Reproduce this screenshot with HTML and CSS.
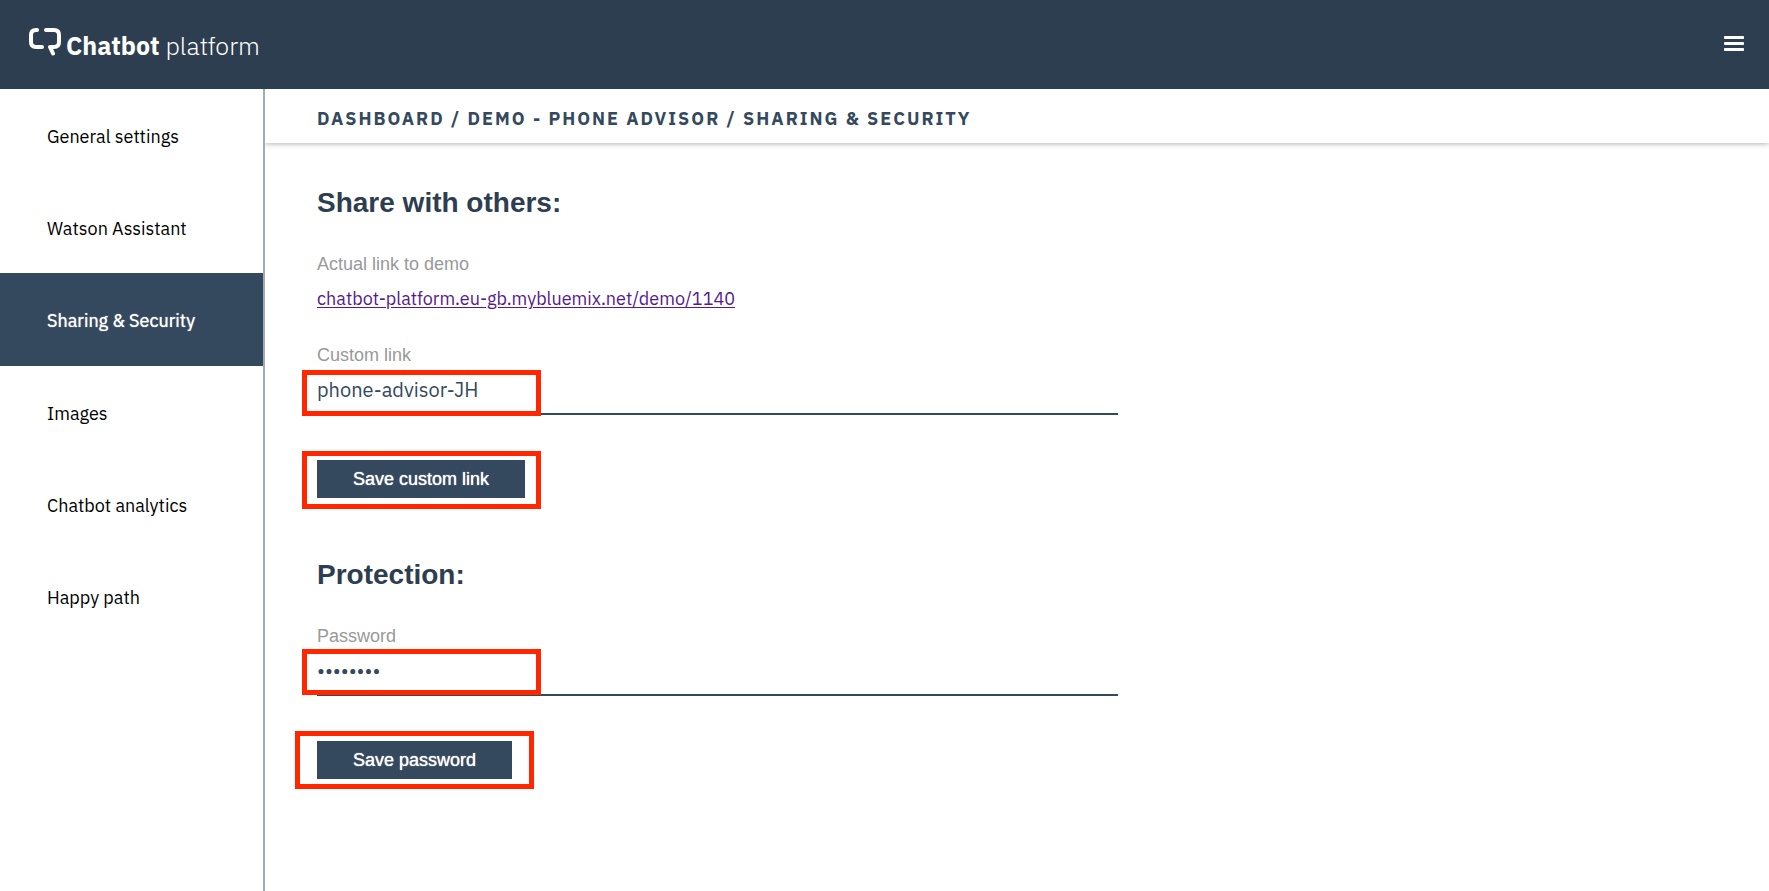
FILE: index.html
```html
<!DOCTYPE html>
<html lang="en">
<head>
<meta charset="utf-8">
<title>Chatbot platform</title>
<link rel="stylesheet" href="styles.css">
</head>
<body>
<header class="topbar">
  <a class="brand" href="#">
    <svg class="brand-mark" viewBox="0 0 34 30" fill="none" stroke="currentColor" stroke-width="4" stroke-linecap="round" stroke-linejoin="round" aria-hidden="true">
      <path d="M9 4H8Q3 4 3 9V16Q3 21 8 21H14"/>
      <path d="M18 4H26Q31 4 31 9V16Q31 21 26 21H22L25 27.500"/>
    </svg>
    <span class="brand-name"><strong>Chatbot</strong> platform</span>
  </a>
  <button class="menu-button" type="button" aria-label="Menu">
    <svg class="menu-icon" viewBox="0 0 20 18" fill="currentColor" aria-hidden="true">
      <rect x="0" y="1" width="20" height="3" rx="0.800"/>
      <rect x="0" y="7" width="20" height="3" rx="0.800"/>
      <rect x="0" y="13" width="20" height="3" rx="0.800"/>
    </svg>
  </button>
</header>
<div class="layout">
  <nav class="sidebar">
    <a class="nav-item" href="#">General settings</a>
    <a class="nav-item" href="#">Watson Assistant</a>
    <a class="nav-item active" href="#" aria-current="page">Sharing &amp; Security</a>
    <a class="nav-item" href="#">Images</a>
    <a class="nav-item" href="#">Chatbot analytics</a>
    <a class="nav-item" href="#">Happy path</a>
  </nav>
  <main class="main">
    <div class="crumbs">Dashboard / Demo - Phone Advisor / Sharing &amp; Security</div>
    <div class="content">
      <section class="section">
        <h2 class="title">Share with others:</h2>
        <p class="label">Actual link to demo</p>
        <a class="demo-link" href="#">chatbot-platform.eu-gb.mybluemix.net/demo/1140</a>
        <form class="form">
          <label class="label" for="custom-link">Custom link</label>
          <div class="field">
            <input class="input" id="custom-link" type="text" value="phone-advisor-JH">
            <span class="marker marker-field"></span>
          </div>
          <div class="action">
            <button class="button" type="button">Save custom link</button>
            <span class="marker marker-link"></span>
          </div>
        </form>
      </section>
      <section class="section">
        <h2 class="title">Protection:</h2>
        <form>
          <label class="label" for="password">Password</label>
          <div class="field">
            <input class="input" id="password" type="password" value="password">
            <span class="marker marker-password"></span>
          </div>
          <div class="action">
            <button class="button" type="button">Save password</button>
            <span class="marker marker-save"></span>
          </div>
        </form>
      </section>
    </div>
  </main>
</div>
</body>
</html>
```
FILE: styles.css
```css
* {
  box-sizing: border-box;
}

body {
  margin: 0;
  min-height: 100vh;
  display: flex;
  flex-direction: column;
  background: #fff;
  color: #34495e;
  font: 18px/24px "IBM Plex Sans", Roboto, sans-serif;
}

.topbar {
  display: flex;
  align-items: center;
  justify-content: space-between;
  height: 89px;
  padding: 0 25px 1px 28px;
  background: #2d3e50;
  color: #fff;
}

.brand {
  display: flex;
  align-items: flex-start;
  gap: 4px;
  color: #fff;
  text-decoration: none;
}

.brand-mark {
  width: 34px;
  height: 30px;
}

.brand-name {
  padding-top: 4px;
  font-size: 25px;
  line-height: 32px;
  font-weight: 300;
}

.brand-name strong {
  font-weight: 700;
}

.menu-button {
  display: flex;
  padding: 0;
  border: 0;
  background: none;
  color: #fff;
}

.menu-icon {
  width: 20px;
  height: 18px;
}

.layout {
  flex: 1;
  display: flex;
}

.sidebar {
  flex: none;
  width: 265px;
  border-right: 2px solid #a0abb8;
}

.nav-item {
  display: block;
  padding: 36px 20px 32px 47px;
  color: #000;
  text-decoration: none;
}

.nav-item.active {
  padding-bottom: 33px;
  background: #34495e;
  color: #fff;
  text-shadow: 0 0 1px #fff;
}

.main {
  flex: 1;
}

.crumbs {
  padding: 18px 52px 12px;
  box-shadow: 0 1px 5px rgba(0, 0, 0, 0.3);
  clip-path: inset(0 0 -8px 0);
  font-weight: 700;
  letter-spacing: 2px;
  text-transform: uppercase;
}

.content {
  padding: 40px 52px;
}

.section {
  max-width: 801px;
  margin-bottom: 57px;
}

.title {
  margin: 0 0 29px;
  color: #2d3e50;
  font: 700 28px/40px "Liberation Sans", Arial, sans-serif;
}

.label {
  display: block;
  margin: 0;
  color: #999;
  font: 18px/24px "Liberation Sans", Arial, sans-serif;
}

.demo-link {
  display: inline-block;
  margin-top: 11px;
  color: #551a8b;
  text-underline-offset: 2px;
}

.form {
  margin-top: 32px;
}

.field,
.action {
  position: relative;
}

.input {
  display: block;
  width: 100%;
  height: 48px;
  padding: 0 0 2px;
  border: 0;
  border-bottom: 2px solid #34495e;
  background: none;
  color: #34495e;
  font: 20px/24px "IBM Plex Sans", Roboto, sans-serif;
}

.action {
  margin-top: 45px;
}

.button {
  display: block;
  height: 38px;
  padding: 0 36px;
  border: 0;
  background: #34495e;
  color: #fff;
  font: 18px/24px "Liberation Sans", Arial, sans-serif;
  text-shadow: 0 0 1px #fff;
}

/* Red highlight frames laid over the fields and buttons */
.marker {
  position: absolute;
  left: -15px;
  width: 239px;
  border: 5px solid #ff2600;
  pointer-events: none;
}

.marker-field {
  bottom: -1px;
  height: 46px;
}

.marker-password {
  bottom: 1px;
  height: 46px;
}

.marker-link {
  top: -9px;
  height: 58px;
}

.marker-save {
  top: -10px;
  left: -22px;
  height: 58px;
}
```
